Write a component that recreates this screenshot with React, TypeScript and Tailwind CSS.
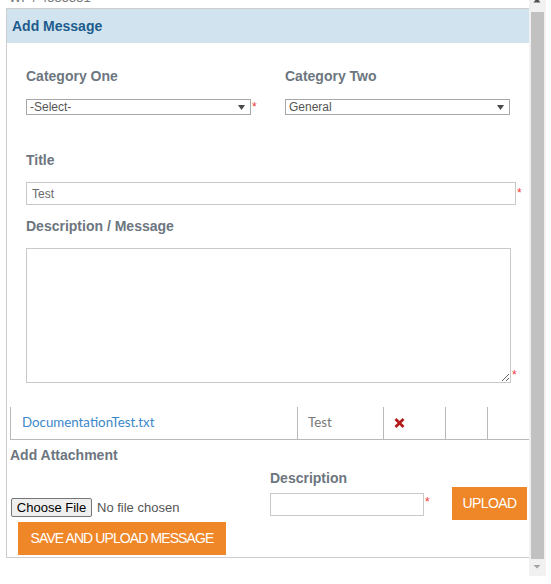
import React from 'react';

const label = "text-[14px] leading-[20px] font-bold text-[#6d7680] font-['Liberation_Sans',Arial,sans-serif]";

function Star({ className = '' }: { className?: string }) {
  return (
    <span className={`text-[12px] leading-none text-[#f23a3a] font-['Liberation_Sans',Arial,sans-serif] ml-px ${className}`}>*</span>
  );
}

function FakeSelect({ value, width }: { value: string; width: string }) {
  return (
    <div className={`${width} h-[16px] border border-[#a7a7a7] bg-white flex items-center justify-between pl-[3px] pr-[5px]`}>
      <span className="text-[12px] leading-none text-[#555] font-['Liberation_Sans',Arial,sans-serif]">{value}</span>
      <svg width="7" height="5" viewBox="0 0 7 5">
        <polygon points="0,0 7,0 3.5,5" fill="#4a4a4a" />
      </svg>
    </div>
  );
}

function OrangeButton({ children, className = '' }: { children: React.ReactNode; className?: string }) {
  return (
    <button className={`h-[33px] bg-[#ef8627] text-white text-[14px] uppercase font-['Liberation_Sans',Arial,sans-serif] flex items-center justify-center ${className}`}>
      {children}
    </button>
  );
}

export default function App() {
  return (
    <div className="w-[551px] h-[584px] bg-white overflow-hidden flex items-start">
      {/* scrolled content */}
      <div className="w-[529px] shrink-0">
        <div className="h-[8px] overflow-hidden pl-[9px]">
          <div className="-mt-[9px] text-[13px] leading-[13px] text-[#777] font-['Liberation_Sans',Arial,sans-serif]">WF / 4555551</div>
        </div>

        <div className="ml-[6px] border-l border-t border-b border-[#cdcdcd]">
          <div className="h-[34px] bg-[#d0e3ef] flex items-center pl-[5px]">
            <span className="text-[14px] font-bold text-[#1d5b8c] font-['Liberation_Sans',Arial,sans-serif]">Add Message</span>
          </div>

          <div className="pl-[19px]">
            <div className="flex mt-[23px]">
              <div className="w-[259px]">
                <div className={label}>Category One</div>
                <div className="flex items-start mt-[13px]">
                  <FakeSelect value="-Select-" width="w-[225px]" />
                  <Star className="mt-[2px]" />
                </div>
              </div>
              <div className="w-[240px]">
                <div className={label}>Category Two</div>
                <div className="flex items-start mt-[13px]">
                  <FakeSelect value="General" width="w-[225px]" />
                </div>
              </div>
            </div>

            <div className={`${label} mt-[35px]`}>Title</div>
            <div className="flex items-start mt-[12px]">
              <div className="w-[490px] h-[23px] border border-[#c9c9c9] flex items-center pl-[5px]">
                <span className="text-[12px] text-[#6a6a6a] font-['Liberation_Sans',Arial,sans-serif]">Test</span>
              </div>
              <Star className="mt-[5px]" />
            </div>

            <div className={`${label} mt-[11px]`}>Description / Message</div>
            <div className="flex items-end mt-[12px]">
              <textarea className="block w-[485px] h-[135px] border border-[#c9c9c9] outline-none" />
              <Star className="mb-[2px]" />
            </div>
          </div>

          {/* attachments table */}
          <div className="ml-[3px] mt-[24px] h-[33px] flex border-b border-[#b9b9b9] font-['Lato','Open_Sans',sans-serif] text-[13.3px]">
            <div className="w-[288px] border-l border-r border-[#b9b9b9] flex items-center pl-[11px] text-[#3a87c9]">
              DocumentationTest.txt
            </div>
            <div className="w-[86px] border-r border-[#b9b9b9] flex items-center pl-[10px] text-[#777]">Test</div>
            <div className="w-[62px] border-r border-[#b9b9b9] flex items-center pl-[10px]">
              <svg width="11" height="10" viewBox="0 0 11 10">
                <path d="M1.5 1 L9.5 9 M9.5 1 L1.5 9" stroke="#b51c1c" strokeWidth="2.8" strokeLinecap="butt" />
              </svg>
            </div>
            <div className="w-[42px] border-r border-[#b9b9b9]" />
            <div className="flex-1" />
          </div>

          <div className={`${label} ml-[3px] mt-[5px]`}>Add Attachment</div>

          <div className="flex pl-[4px]">
            <div className="w-[259px] pt-[30px] flex items-center">
              <div className="w-[81px] h-[19px] border border-[#767676] rounded-[2px] bg-[#efefef] flex items-center justify-center text-[13px] text-black font-['Liberation_Sans',Arial,sans-serif]">
                Choose File
              </div>
              <span className="ml-[5px] text-[13px] text-[#555] font-['Liberation_Sans',Arial,sans-serif]">No file chosen</span>
            </div>
            <div className="w-[182px] pt-[3px]">
              <div className={label}>Description</div>
              <div className="flex items-start mt-[5px]">
                <div className="w-[154px] h-[23px] border border-[#c9c9c9]" />
                <Star className="mt-[3px]" />
              </div>
            </div>
            <OrangeButton className="w-[75px] mt-[22px] tracking-[-0.6px]">Upload</OrangeButton>
          </div>

          <OrangeButton className="w-[208px] ml-[11px] mt-[2px] mb-[2px] tracking-[-0.9px]">Save and Upload Message</OrangeButton>
        </div>
      </div>

      {/* scrollbar */}
      <div className="w-[17px] h-[576px] bg-[#f1f1f1] flex flex-col shrink-0">
        <svg width="17" height="12" viewBox="0 0 17 12">
          <polygon points="8,-2 11.5,2.5 4.5,2.5" fill="#505050" />
        </svg>
        <div className="mx-[2px] h-[547px] bg-[#c1c1c1]" />
        <svg width="17" height="17" viewBox="0 0 17 17">
          <polygon points="4.5,6 11.5,6 8,9.5" fill="#a3a3a3" />
        </svg>
      </div>
    </div>
  );
}
